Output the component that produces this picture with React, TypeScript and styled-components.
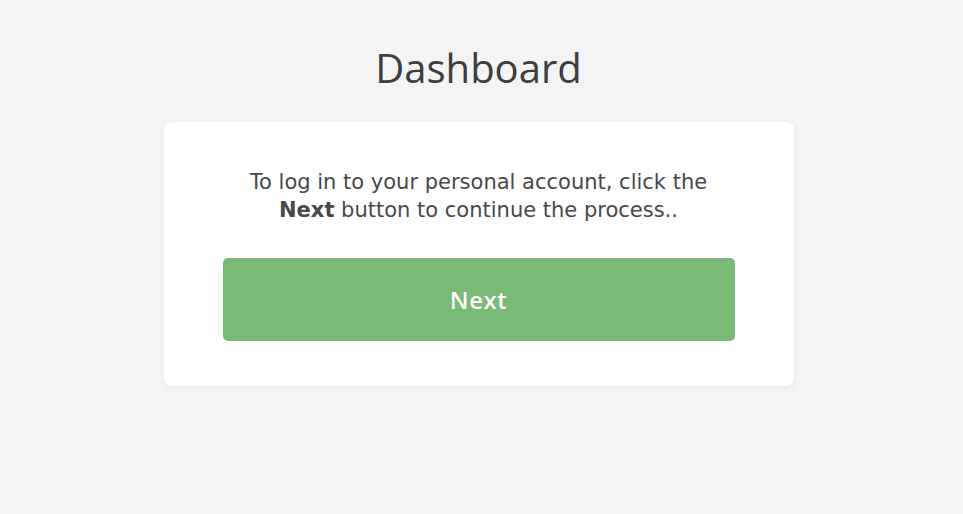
import styled, { createGlobalStyle } from "styled-components";

const GlobalStyle = createGlobalStyle`
  html, body {
    margin: 0;
    padding: 0;
    background-color: #f4f4f4;
    font-family: "Open Sans", "Liberation Sans", sans-serif;
  }
`;

const Page = styled.main`
  display: flex;
  flex-direction: column;
  align-items: center;
  padding: 44px 6px 0 0;
  min-height: 514px;
  box-sizing: border-box;
`;

const Title = styled.h1`
  margin: 0 0 30px;
  font-size: 40px;
  line-height: 48px;
  font-weight: 400;
  color: #3d3d3d;
`;

const Card = styled.section`
  width: 630px;
  box-sizing: border-box;
  padding: 46px 59px 45px;
  background-color: #fff;
  border-radius: 8px;
  box-shadow: 0 2px 10px rgba(0, 0, 0, 0.05);
  display: flex;
  flex-direction: column;
  align-items: center;
`;

const Message = styled.p`
  margin: 0 0 34px;
  font-family: "DejaVu Sans", "Open Sans", sans-serif;
  font-size: 21px;
  line-height: 28px;
  color: #484848;
  text-align: center;
  white-space: nowrap;
`;

const NextButton = styled.button`
  width: 512px;
  height: 83px;
  border: none;
  border-radius: 5px;
  background-color: #77b975;
  color: #fff;
  font-family: inherit;
  font-size: 24px;
  font-weight: 600;
  letter-spacing: 0.5px;
  cursor: pointer;
`;

const App = () => {
  return (
    <>
      <GlobalStyle />
      <Page>
        <Title>Dashboard</Title>
        <Card>
          <Message>
            To log in to your personal account, click the
            <br />
            <b>Next</b> button to continue the process..
          </Message>
          <NextButton type="button">Next</NextButton>
        </Card>
      </Page>
    </>
  );
};

export default App;
